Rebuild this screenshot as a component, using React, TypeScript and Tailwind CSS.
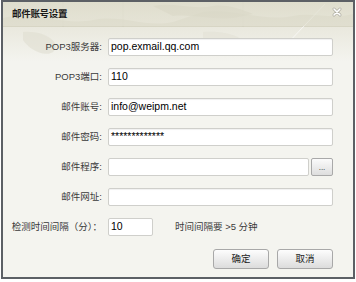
import React from "react";

const font = "font-['Liberation_Sans','Noto_Sans_CJK_SC',sans-serif]";

function Field({ label, value, children }: { label: string; value?: string; children?: React.ReactNode }) {
  return (
    <div className="flex items-center gap-[6px] h-[18px]">
      <div className="w-[99px] flex justify-end whitespace-nowrap text-[9.5px] text-[#3a3a3a]">{label}</div>
      {children ?? (
        <div className="w-[225px] h-[18px] bg-white border border-[#cfcfcb] rounded-[2px] shadow-[inset_0_1px_1px_rgba(0,0,0,0.06)] flex items-center pl-[2px] text-[10.5px] text-black">
          {value}
        </div>
      )}
    </div>
  );
}

function CloseIcon() {
  return (
    <svg width="12" height="12" viewBox="0 0 12 12">
      <path d="M3 3 L9 9 M9 3 L3 9" stroke="#8c8a80" strokeWidth="3" strokeLinecap="round" opacity="0.6" />
      <path d="M3 3 L9 9 M9 3 L3 9" stroke="#ffffff" strokeWidth="1.6" strokeLinecap="round" />
    </svg>
  );
}

function MapTexture() {
  return (
    <svg className="absolute inset-0" width="350" height="60" viewBox="0 0 350 60">
      <path d="M0 16 C30 8 60 24 90 18 C120 12 140 26 170 20 L200 10 C230 6 260 20 290 14 C310 10 330 18 350 12 L350 25 L0 25 Z" fill="#cfcdb9" opacity="0.7" />
      <path d="M150 4 C170 0 190 8 210 4 C225 2 240 8 250 12 L230 16 C210 18 190 12 170 14 Z" fill="#c8c5b0" opacity="0.6" />
      <path d="M20 30 C40 28 60 40 50 50 C40 56 25 46 20 38 Z" fill="#e0ded0" opacity="0.6" />
      <path d="M200 30 C230 28 250 40 240 48 C225 54 210 44 200 38 Z" fill="#e2e0d4" opacity="0.5" />
      <path d="M282 44 L322 2" stroke="#ffffff" strokeWidth="0.8" opacity="0.8" />
      <path d="M60 0 L60 25 M120 0 L120 25 M240 0 L240 25" stroke="#cbc9b8" strokeWidth="0.6" opacity="0.6" />
    </svg>
  );
}

export default function App() {
  return (
    <div className={`w-[356px] h-[282px] bg-white ${font}`}>
      <div className="ml-[1px] w-[354px] h-[279px] border-2 border-[#5c6065] bg-[#f4f4ef] flex flex-col relative overflow-hidden">
        <div className="absolute left-0 top-0 w-full h-[60px] bg-gradient-to-b from-[#e2e0d1] to-[#f4f4ef]">
          <MapTexture />
        </div>
        <div className="relative h-[24px] flex items-center justify-between px-[9px] bg-gradient-to-b from-[#deddcc]/70 to-[#e4e2d4]/70">
          <span className="text-[9.5px] font-bold text-[#1a1a1a] tracking-[-0.3px]">邮件账号设置</span>
          <span className="-mt-[5px] mr-[1px]"><CloseIcon /></span>
        </div>
        <div className="relative flex flex-col gap-[12px] pt-[12px]">
          <Field label="POP3服务器:" value="pop.exmail.qq.com" />
          <Field label="POP3端口:" value="110" />
          <Field label="邮件账号:" value="info@weipm.net" />
          <Field label="邮件密码:" value="*************" />
          <Field label="邮件程序:">
            <div className="flex gap-[2px]">
              <div className="w-[201px] h-[18px] bg-white border border-[#cfcfcb] rounded-[2px]" />
              <button className="w-[22px] h-[18px] rounded-[2px] border border-[#a9a9a9] bg-gradient-to-b from-[#fbfbfb] to-[#dedede] text-[8px] leading-none text-[#222] flex items-center justify-center pt-[2px]">
                ...
              </button>
            </div>
          </Field>
          <Field label="邮件网址:" value="" />
          <Field label="检测时间间隔（分）：">
            <div className="flex items-center">
              <div className="w-[45px] h-[18px] bg-white border border-[#cfcfcb] rounded-[2px] flex items-center pl-[2px] text-[10.5px] text-black">
                10
              </div>
              <span className="ml-[22px] text-[9.5px] text-[#3a3a3a] whitespace-nowrap">时间间隔要 &gt;5 分钟</span>
            </div>
          </Field>
        </div>
        <div className="relative flex justify-end gap-[8px] pr-[20px] mt-[13px]">
          <button className="w-[56px] h-[20px] rounded-[3px] border border-[#a8a8a8] bg-gradient-to-b from-[#fdfdfd] to-[#dcdcdc] text-[9.5px] text-[#222]">
            确定
          </button>
          <button className="w-[56px] h-[20px] rounded-[3px] border border-[#a8a8a8] bg-gradient-to-b from-[#fdfdfd] to-[#dcdcdc] text-[9.5px] text-[#222]">
            取消
          </button>
        </div>
      </div>
    </div>
  );
}
